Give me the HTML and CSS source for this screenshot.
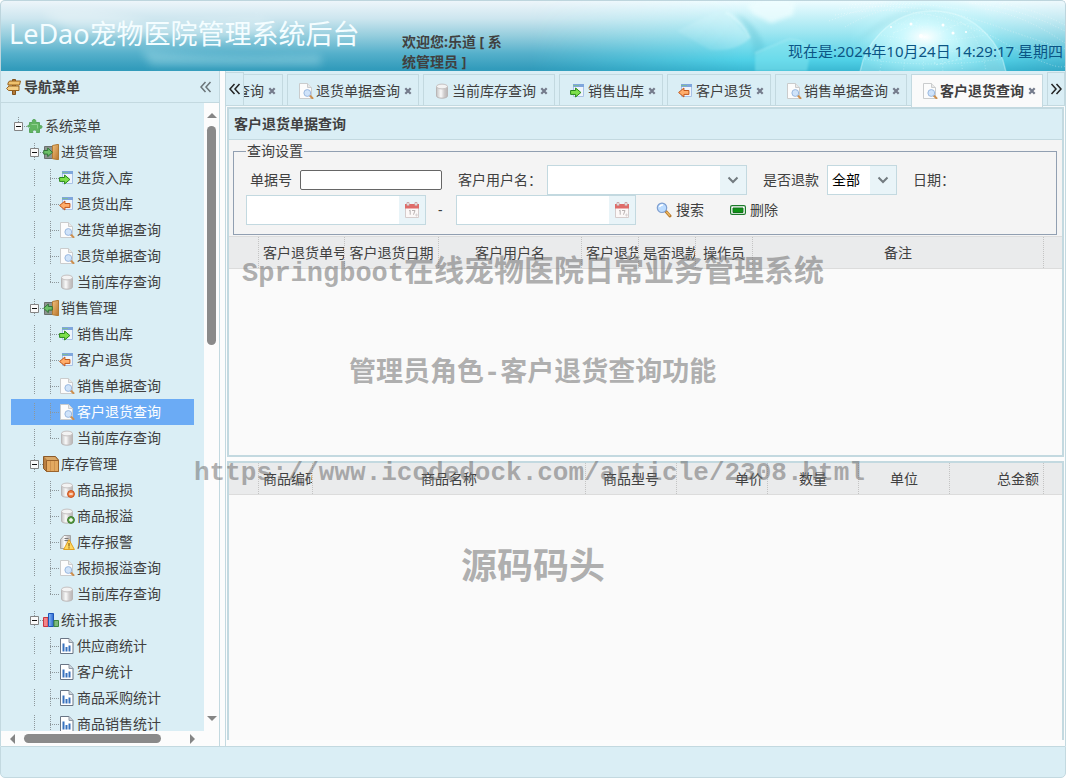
FILE: index.html
```html
<!DOCTYPE html>
<html lang="zh-CN">
<head>
<meta charset="utf-8">
<title>LeDao宠物医院管理系统后台</title>
<link rel="stylesheet" href="styles.css">
</head>
<body>
<svg class="defs" aria-hidden="true">
  <defs>
    <linearGradient id="cyl" x1="0" x2="1" y1="0" y2="0"><stop offset="0" stop-color="#c2c2c2"/><stop offset=".4" stop-color="#fafafa"/><stop offset=".7" stop-color="#cfcccc"/><stop offset="1" stop-color="#b9b5b5"/></linearGradient>
    <linearGradient id="wood" x1="0" x2="1" y1="0" y2="1"><stop offset="0" stop-color="#f0c07c"/><stop offset="1" stop-color="#b9752c"/></linearGradient>
    <linearGradient id="blue" x1="0" x2="1" y1="0" y2="0"><stop offset="0" stop-color="#8fc0fa"/><stop offset="1" stop-color="#2a66cf"/></linearGradient>
    <symbol id="i-puzzle" viewBox="0 0 16 16"><path d="M2.500 4.500h3.200C4.800 2.500 5.500 1.500 7 1.500s2.500 1 1.500 3h4V8c1.500-1 2.700-.3 2.500 1s-1.200 2-2.500 1v4.500H9.300c.8-1.600-.4-2.500-1.800-2.500s-2.500.9-1.500 2.500H2.500v-4C3.700 11 3.800 8 1.500 9c-1 0-1.200-1.500 0-1.700h1z" fill="#62b562" stroke="#58a75e"/><path d="M4.500 6.500h6v4" fill="none" stroke="#8fd08f"/></symbol>
    <symbol id="i-doorin" viewBox="0 0 16 16"><path d="M1.500 2.500h8v12h-8z" fill="#8d9490" stroke="#6b706e"/><path d="M9.500 1.500l6-1.200v15.400l-6-1z" fill="url(#wood)" stroke="#b17a34"/><path d="M.7 6.500h4V4l4.800 4.300-4.800 4.300v-2.500h-4z" fill="#6cc067" stroke="#2f7436"/></symbol>
    <symbol id="i-doorout" viewBox="0 0 16 16"><path d="M1.500 2.500h8v12h-8z" fill="#8d9490" stroke="#6b706e"/><path d="M9.500 1.500l6-1.200v15.400l-6-1z" fill="url(#wood)" stroke="#b17a34"/><path d="M9.300 6.500h-4V4L.6 8.300l4.700 4.300v-2.500h4z" fill="#6cc067" stroke="#2f7436"/></symbol>
    <symbol id="i-in" viewBox="0 0 16 16"><path d="M3.500 1.500h10v12h-10z" fill="#eef4fb" stroke="#a9c2e6"/><path d="M3 1h11v3H3z" fill="#7fa6dc"/><path d="M3 2h6v1H3z" fill="#7dbb9c"/><path d="M.6 7.500h5V5l5.300 4.500L5.600 14v-2.600h-5z" fill="#7ee04a" stroke="#28871a"/></symbol>
    <symbol id="i-back" viewBox="0 0 16 16"><path d="M3.500 1.500h10v12h-10z" fill="#eef4fb" stroke="#a9c2e6"/><path d="M3 1h11v3H3z" fill="#7fa6dc"/><path d="M3 2h6v1H3z" fill="#7dbb9c"/><path d="M10.900 7.500h-5V5L.6 9.500 5.900 14v-2.600h5z" fill="#ffad6b" stroke="#c2561a"/></symbol>
    <symbol id="i-doc" viewBox="0 0 16 16"><path d="M1.500.5h8l4 4v11h-12z" fill="#fcfcfc" stroke="#cacccd"/><path d="M9.500.5v4h4" fill="#e8e8e8" stroke="#cacccd"/><path d="M11.800 12.500l2.700 2.700" stroke="#cc8f4e" stroke-width="2" stroke-linecap="round"/><circle cx="9.300" cy="10" r="3.400" fill="#cfe3fa" stroke="#9bb9e0"/></symbol>
    <symbol id="i-db" viewBox="0 0 16 16"><path d="M2.500 3.500v9.500c0 1.200 2.400 2.200 5.500 2.200s5.500-1 5.500-2.200V3.500z" fill="url(#cyl)" stroke="#bab6b6"/><ellipse cx="8" cy="3.500" rx="5.500" ry="2.400" fill="#f3f3f3" stroke="#c5c1c1"/></symbol>
    <symbol id="i-dbminus" viewBox="0 0 16 16"><use href="#i-db"/><circle cx="12" cy="12" r="3.400" fill="#ee8549" stroke="#c84a14"/><path d="M10.300 12h3.400" stroke="#fff" stroke-width="1.300"/></symbol>
    <symbol id="i-dbplus" viewBox="0 0 16 16"><use href="#i-db"/><circle cx="12" cy="12" r="3.400" fill="#5fa448" stroke="#38752a"/><path d="M10.100 12h3.800M12 10.100v3.800" stroke="#fff" stroke-width="1.300"/></symbol>
    <symbol id="i-warn" viewBox="0 0 16 16"><path d="M1.500 5.500l3.500-4h6.500v10l-3 3h-7z" fill="url(#cyl)" stroke="#a5a5a5"/><path d="M5.500 4.500h4M5.500 6.500h4" stroke="#777"/><path d="M10 5.700l5.400 9.800H4.600z" fill="#ffd75e" stroke="#e0a021"/><path d="M10 9v3.500M10 13.300v1.200" stroke="#6d4b09"/></symbol>
    <symbol id="i-box" viewBox="0 0 16 16"><path d="M.5.500h12l3 3.500v11.500h-12l-3-3z" fill="#b97f42" stroke="#8a5a2a"/><path d="M1.500 1h10.500l2.500 3H4z" fill="#d9a868"/><path d="M3.500 4.500h12v11h-12z" fill="#e3a961" stroke="#9a632c"/><path d="M7.500 5v10M11.500 5v10" stroke="#cf9350"/></symbol>
    <symbol id="i-chart" viewBox="0 0 16 16"><path d="M.5 5.500h4.500v9H.5z" fill="#f2858a" stroke="#c9353f"/><path d="M5.500 1.500h5v13h-5z" fill="url(#blue)" stroke="#1d55b9"/><path d="M11 8.500h4.500v6H11z" fill="#7cba7c" stroke="#3e863e"/></symbol>
    <symbol id="i-report" viewBox="0 0 16 16"><path d="M1.500.5h8.500l4 4v11H1.500z" fill="#fff" stroke="#697585"/><path d="M10 .5v4h4" fill="#ccd3da" stroke="#8f99a5"/><path d="M4.500 5.500v8M7.500 9v4.500M10.500 7.500v6" stroke="#3872be" stroke-width="2"/></symbol>
    <symbol id="i-sign" viewBox="0 0 16 16"><path d="M6.500.5h3v15h-3z" fill="#b47b37" stroke="#82531e"/><path d="M2 4l1.500-2h11L13.500 6H2z" fill="#efc16d" stroke="#95611f"/><path d="M.6 9.500L3 7h10v4.500H2.500z" fill="#f5cf85" stroke="#95611f"/></symbol>
    <symbol id="i-cal" viewBox="0 0 16 16"><path d="M1.500 3h13v12.500h-13z" fill="#fcf8f7" stroke="#d5cccc"/><path d="M1 2h14v4.500H1z" fill="#df6b68"/><path d="M3 .5h2v3H3zM11 .5h2v3h-2z" fill="#fff" stroke="#c9a9a9"/><path d="M5 9l1.200-.8v4.500M8 8.500h3l-1.500 4.200" fill="none" stroke="#b9b2b2"/><path d="M11 13h3M12.500 11.500v3" stroke="#d9d4d4"/></symbol>
    <symbol id="i-search" viewBox="0 0 16 16"><path d="M10 9.500l4 4.500" stroke="#b7792b" stroke-width="3" stroke-linecap="round"/><path d="M10.400 9.800l3.500 3.900" stroke="#efb962" stroke-width="1.300"/><circle cx="6" cy="5.800" r="4.700" fill="#bcdcff" stroke="#7f9fd0" stroke-width="1.200"/><path d="M3.500 5a3 3 0 0 1 3.500-2" fill="none" stroke="#fff" stroke-width="1.500"/></symbol>
    <symbol id="i-remove" viewBox="0 0 16 16"><rect x=".6" y="3.600" width="14.800" height="8.800" rx="1.500" fill="#fff" stroke="#1b792a" stroke-width="1.200"/><path d="M3 6h10v4.500H3z" fill="#0e9415" stroke="#176e20"/></symbol>
    <symbol id="i-minus" viewBox="0 0 9 9"><path d="M.5.5h8v8h-8z" fill="#fafafa" stroke="#848484"/><path d="M2 4.500h5" stroke="#111"/></symbol>
    <symbol id="i-x" viewBox="0 0 8 8"><path d="M1.300 1.300l5.400 5.400M6.700 1.300L1.300 6.700" stroke="#747b8b" stroke-width="2.200"/></symbol>
    <symbol id="i-left" viewBox="0 0 12 12"><path d="M5.500 1L1 6l4.500 5M10.500 1L6 6l4.500 5" fill="none" stroke="currentColor" stroke-width="1.500"/></symbol>
    <symbol id="i-right" viewBox="0 0 12 12"><path d="M1.500 1L6 6l-4.500 5M6.500 1L11 6l-4.500 5" fill="none" stroke="currentColor" stroke-width="1.500"/></symbol>
    <symbol id="i-down" viewBox="0 0 12 12"><path d="M1.500 3.500L6 8l4.500-4.500" fill="none" stroke="#737b80" stroke-width="2"/></symbol>
  </defs>
</svg>

<div class="app">
  <header class="banner">
    <svg class="banner-left" viewBox="0 0 360 70" aria-hidden="true">
      <defs><filter id="soft" x="-20%" y="-50%" width="140%" height="200%"><feGaussianBlur stdDeviation="4"/></filter></defs>
      <path d="M40 12q60-6 110 10l110-4 20 12-60 8-150-8z" fill="#fff" opacity=".3" filter="url(#soft)"/>
      <path d="M140 48q60 10 180 6v10H150z" fill="#c8f0f5" opacity=".35" filter="url(#soft)"/>
    </svg>
    <svg class="banner-right" viewBox="0 0 536 70" aria-hidden="true">
      <defs>
        <linearGradient id="cyan" x1="0" x2="0" y1="0" y2="1"><stop offset="0" stop-color="#eefcff"/><stop offset=".45" stop-color="#9ee6f1"/><stop offset=".85" stop-color="#4fd0e6"/><stop offset="1" stop-color="#3ab8d2"/></linearGradient>
        <linearGradient id="fadein" x1="0" x2="1" y1="0" y2="0"><stop offset="0" stop-color="#000"/><stop offset=".4" stop-color="#fff"/><stop offset=".85" stop-color="#fff"/><stop offset="1" stop-color="#777"/></linearGradient>
        <mask id="side"><path d="M0 0h536v70H0z" fill="url(#fadein)"/></mask>
        <radialGradient id="glow"><stop offset="0" stop-color="#fff"/><stop offset=".3" stop-color="#d4fbff" stop-opacity=".8"/><stop offset="1" stop-color="#aef3fa" stop-opacity="0"/></radialGradient>
        <linearGradient id="dice" x1="0" x2="1" y1="1" y2="0"><stop offset="0" stop-color="#d5f5fa" stop-opacity="0"/><stop offset="1" stop-color="#d5f5fa" stop-opacity=".6"/></linearGradient>
        <filter id="mist" x="-20%" y="-50%" width="140%" height="200%"><feGaussianBlur stdDeviation="2"/></filter>
        <filter id="haze"><feGaussianBlur stdDeviation="1"/></filter>
      </defs>
      <path d="M0 0h536v70H0z" fill="url(#cyan)" mask="url(#side)"/>
      <path d="M148 30l36-18q8-3 13-1l24 26q-14 14-40 12z" fill="url(#dice)" filter="url(#haze)"/>
      <path d="M197 11q17 11 24 26" fill="none" stroke="#e9fdff" stroke-width="1.500" opacity=".7" filter="url(#haze)"/>
      <path d="M206 12q20 8 30 34l-12 12q2-26-18-46z" fill="#55b9cc" opacity=".3" filter="url(#mist)"/>
      <path d="M218 4l12-4h36l-2 14-22 8-18-9z" fill="#f0feff" opacity=".75" filter="url(#mist)"/>
      <path d="M226 52l34-14q14 0 22 12l-4 20h-52z" fill="#85e5ef" opacity=".5" filter="url(#haze)"/>
      <path d="M226 52l34-14q14 0 22 12" fill="none" stroke="#c4f6fa" opacity=".6" filter="url(#haze)"/>
      <path d="M326 43Q360 4 402 8q42 3 72 62h-14Q423 20 390 20q-34 0-64 23z" fill="#59afc0" opacity=".2" filter="url(#mist)"/>
      <circle cx="404" cy="84" r="74" fill="#d8fbff" opacity=".35"/>
      <ellipse cx="396" cy="36" rx="76" ry="44" fill="url(#glow)"/>
      <g fill="none" stroke="#e8ffff" opacity=".4">
        <circle cx="404" cy="84" r="74" stroke-width="1.500"/>
        <ellipse cx="404" cy="84" rx="54" ry="74" stroke-dasharray="1 2"/><ellipse cx="404" cy="84" rx="30" ry="74" stroke-dasharray="1 2"/><ellipse cx="404" cy="84" rx="10" ry="74" stroke-dasharray="1 2"/>
        <path d="M366 22q38 8 76 0M352 34q52 10 104 0M342 46q62 10 124 0M336 58q68 10 136 0" stroke-dasharray="1 2"/>
        <path d="M364 32l22-8 18 12 28-15 14 9M384 18l20 18 2 28 42-10" stroke-dasharray="2 2"/>
      </g>
      <g fill="none" stroke="#fff" stroke-dasharray="1 2" opacity=".4"><path d="M310 8q80-10 160 18t66 20M306 14q90-16 166 26t64 16M300 20q50-20 80-16M440 2q50 4 96 28M456 8q40 6 80 34M320 4q60-6 120 6M316 26q30-18 60-20M470 2q36 6 66 22"/></g>
      <g fill="#fff"><circle cx="382" cy="23" r="1.500"/><circle cx="392" cy="35" r="2"/><circle cx="414" cy="24" r="1.500"/><circle cx="424" cy="32" r="1.500"/><circle cx="362" cy="26" r="1"/><circle cx="437" cy="31" r="1"/></g>
    </svg>
    <h1 class="brand">LeDao宠物医院管理系统后台</h1>
    <p class="welcome">欢迎您:乐道 [ 系统管理员 ]</p>
    <time class="clock">现在是:2024年10月24日 14:29:17 星期四</time>
  </header>

  <div class="middle">
    <nav class="sidebar">
      <div class="side-head"><svg class="icon"><use href="#i-sign"/></svg><h2>导航菜单</h2><button class="collapse" aria-label="折叠"><svg><use href="#i-left"/></svg></button></div>
      <div class="side-body">
        <ul class="tree">
          <li><div class="node"><button class="hit root" aria-label="收起"><svg><use href="#i-minus"/></svg></button><svg class="icon"><use href="#i-puzzle"/></svg><span>系统菜单</span></div>
            <ul>
              <li><div class="node"><i></i><button class="hit" aria-label="收起"><svg><use href="#i-minus"/></svg></button><svg class="icon"><use href="#i-doorin"/></svg><span>进货管理</span></div>
                <ul>
                  <li><a href="#" class="node"><i></i><i class="line"></i><i class="join"></i><svg class="icon"><use href="#i-in"/></svg><span>进货入库</span></a></li>
                  <li><a href="#" class="node"><i></i><i class="line"></i><i class="join"></i><svg class="icon"><use href="#i-back"/></svg><span>退货出库</span></a></li>
                  <li><a href="#" class="node"><i></i><i class="line"></i><i class="join"></i><svg class="icon"><use href="#i-doc"/></svg><span>进货单据查询</span></a></li>
                  <li><a href="#" class="node"><i></i><i class="line"></i><i class="join"></i><svg class="icon"><use href="#i-doc"/></svg><span>退货单据查询</span></a></li>
                  <li><a href="#" class="node"><i></i><i class="line"></i><i class="join last"></i><svg class="icon"><use href="#i-db"/></svg><span>当前库存查询</span></a></li>
                </ul>
              </li>
              <li><div class="node"><i></i><button class="hit" aria-label="收起"><svg><use href="#i-minus"/></svg></button><svg class="icon"><use href="#i-doorout"/></svg><span>销售管理</span></div>
                <ul>
                  <li><a href="#" class="node"><i></i><i class="line"></i><i class="join"></i><svg class="icon"><use href="#i-in"/></svg><span>销售出库</span></a></li>
                  <li><a href="#" class="node"><i></i><i class="line"></i><i class="join"></i><svg class="icon"><use href="#i-back"/></svg><span>客户退货</span></a></li>
                  <li><a href="#" class="node"><i></i><i class="line"></i><i class="join"></i><svg class="icon"><use href="#i-doc"/></svg><span>销售单据查询</span></a></li>
                  <li><a href="#" class="node selected"><i></i><i class="line"></i><i class="join"></i><svg class="icon"><use href="#i-doc"/></svg><span>客户退货查询</span></a></li>
                  <li><a href="#" class="node"><i></i><i class="line"></i><i class="join last"></i><svg class="icon"><use href="#i-db"/></svg><span>当前库存查询</span></a></li>
                </ul>
              </li>
              <li><div class="node"><i></i><button class="hit" aria-label="收起"><svg><use href="#i-minus"/></svg></button><svg class="icon"><use href="#i-box"/></svg><span>库存管理</span></div>
                <ul>
                  <li><a href="#" class="node"><i></i><i class="line"></i><i class="join"></i><svg class="icon"><use href="#i-dbminus"/></svg><span>商品报损</span></a></li>
                  <li><a href="#" class="node"><i></i><i class="line"></i><i class="join"></i><svg class="icon"><use href="#i-dbplus"/></svg><span>商品报溢</span></a></li>
                  <li><a href="#" class="node"><i></i><i class="line"></i><i class="join"></i><svg class="icon"><use href="#i-warn"/></svg><span>库存报警</span></a></li>
                  <li><a href="#" class="node"><i></i><i class="line"></i><i class="join"></i><svg class="icon"><use href="#i-doc"/></svg><span>报损报溢查询</span></a></li>
                  <li><a href="#" class="node"><i></i><i class="line"></i><i class="join last"></i><svg class="icon"><use href="#i-db"/></svg><span>当前库存查询</span></a></li>
                </ul>
              </li>
              <li><div class="node"><i></i><button class="hit" aria-label="收起"><svg><use href="#i-minus"/></svg></button><svg class="icon"><use href="#i-chart"/></svg><span>统计报表</span></div>
                <ul>
                  <li><a href="#" class="node"><i></i><i class="line"></i><i class="join"></i><svg class="icon"><use href="#i-report"/></svg><span>供应商统计</span></a></li>
                  <li><a href="#" class="node"><i></i><i class="line"></i><i class="join"></i><svg class="icon"><use href="#i-report"/></svg><span>客户统计</span></a></li>
                  <li><a href="#" class="node"><i></i><i class="line"></i><i class="join"></i><svg class="icon"><use href="#i-report"/></svg><span>商品采购统计</span></a></li>
                  <li><a href="#" class="node"><i></i><i class="line"></i><i class="join"></i><svg class="icon"><use href="#i-report"/></svg><span>商品销售统计</span></a></li>
                </ul>
              </li>
            </ul>
          </li>
        </ul>
        <div class="vbar" aria-hidden="true"><span class="arrow up"></span><span class="thumb"></span><span class="arrow down"></span></div>
        <div class="hbar" aria-hidden="true"><span class="arrow left"></span><span class="thumb"></span><span class="arrow right"></span></div>
      </div>
    </nav>

    <main class="center">
      <div class="tabbar">
        <button class="scroll prev" aria-label="向左"><svg><use href="#i-left"/></svg></button>
        <div class="tabs">
          <div class="tab"><svg class="icon"><use href="#i-doc"/></svg><span>进货单据查询</span><button class="close" aria-label="关闭"><svg><use href="#i-x"/></svg></button></div>
          <div class="tab"><svg class="icon"><use href="#i-doc"/></svg><span>退货单据查询</span><button class="close" aria-label="关闭"><svg><use href="#i-x"/></svg></button></div>
          <div class="tab"><svg class="icon"><use href="#i-db"/></svg><span>当前库存查询</span><button class="close" aria-label="关闭"><svg><use href="#i-x"/></svg></button></div>
          <div class="tab"><svg class="icon"><use href="#i-in"/></svg><span>销售出库</span><button class="close" aria-label="关闭"><svg><use href="#i-x"/></svg></button></div>
          <div class="tab"><svg class="icon"><use href="#i-back"/></svg><span>客户退货</span><button class="close" aria-label="关闭"><svg><use href="#i-x"/></svg></button></div>
          <div class="tab"><svg class="icon"><use href="#i-doc"/></svg><span>销售单据查询</span><button class="close" aria-label="关闭"><svg><use href="#i-x"/></svg></button></div>
          <div class="tab active"><svg class="icon"><use href="#i-doc"/></svg><span>客户退货查询</span><button class="close" aria-label="关闭"><svg><use href="#i-x"/></svg></button></div>
        </div>
        <button class="scroll next" aria-label="向右"><svg><use href="#i-right"/></svg></button>
      </div>

      <section class="panel upper">
        <h2 class="panel-title">客户退货单据查询</h2>
        <form class="query">
          <fieldset>
            <legend>查询设置</legend>
            <div class="row first">
              <div class="field"><label for="billno">单据号</label><input class="plain" id="billno" type="text"></div>
              <div class="field tight"><label for="customer">客户用户名：</label><div class="combo"><input id="customer" type="text"><button type="button" aria-label="展开"><svg class="chev"><use href="#i-down"/></svg></button></div></div>
              <div class="field"><label for="refund">是否退款</label><div class="pick"><select id="refund"><option>全部</option></select><svg class="chev"><use href="#i-down"/></svg></div></div>
              <label for="from">日期：</label>
            </div>
            <div class="row">
              <div class="combo date"><input id="from" type="text"><button type="button" aria-label="选择日期"><svg class="icon"><use href="#i-cal"/></svg></button></div>
              <span class="dash">-</span>
              <div class="combo date"><input type="text" aria-label="结束日期"><button type="button" aria-label="选择日期"><svg class="icon"><use href="#i-cal"/></svg></button></div>
              <button type="button" class="action"><svg class="icon"><use href="#i-search"/></svg>搜索</button>
              <button type="button" class="action"><svg class="icon"><use href="#i-remove"/></svg>删除</button>
            </div>
          </fieldset>
        </form>
        <table class="grid">
          <colgroup><col class="w30"><col class="w86"><col class="w94"><col class="w143"><col class="w57"><col class="w57"><col class="w57"><col><col class="w18"></colgroup>
          <thead><tr><th></th><th>客户退货单号</th><th>客户退货日期</th><th>客户用户名</th><th>客户退货</th><th>是否退款</th><th>操作员</th><th>备注</th><th></th></tr></thead>
        </table>
      </section>

      <section class="panel lower">
        <table class="grid">
          <colgroup><col class="w30"><col class="w54"><col><col class="w91"><col class="w91"><col class="w91"><col class="w91"><col class="w94"><col class="w18"></colgroup>
          <thead><tr><th></th><th>商品编码</th><th>商品名称</th><th>商品型号</th><th class="num">单价</th><th>数量</th><th>单位</th><th class="num">总金额</th><th></th></tr></thead>
        </table>
      </section>
    </main>
  </div>

  <footer class="footer"></footer>
</div>

<div class="mark m1"><b>Springboot</b>在线宠物医院日常业务管理系统</div>
<div class="mark m2">管理员角色<b>-</b>客户退货查询功能</div>
<div class="mark m3"><b>https://www.icodedock.com/article/2308.html</b></div>
<div class="mark m4">源码码头</div>
</body>
</html>
```
FILE: styles.css
```css
* { box-sizing: border-box; }
body { margin: 0; background: #fff; color: #404040; font: 14px/20px "Noto Sans", "Noto Sans CJK SC", sans-serif; }
h1, h2, p, ul { margin: 0; padding: 0; font-weight: normal; }
ul { list-style: none; }
button { border: 0; padding: 0; background: none; color: inherit; font: inherit; display: flex; align-items: center; justify-content: center; }
.defs { position: absolute; width: 0; height: 0; }
.icon { width: 16px; height: 16px; flex: none; display: block; }

.app { height: 100vh; display: flex; flex-direction: column; }

.banner { position: relative; display: flex; flex: none; height: 71px; padding: 0 2px 0 8px; overflow: hidden; border: 1px solid #bdd5dd; border-bottom: 0; border-radius: 5px 5px 0 0; background: linear-gradient(#edf5fa, #cde6ef 25%, #94cddd 50%, #55b0cb 75%, #329bbb 97%); }
.banner-left, .banner-right { position: absolute; top: 0; height: 70px; }
.banner-left { left: 0; width: 360px; }
.banner-right { right: 0; width: 536px; }
.brand { position: relative; flex: none; width: 393px; padding-top: 13px; color: #f4fdff; font-size: 27px; line-height: 40px; white-space: nowrap; }
.welcome { position: relative; width: 112px; padding-top: 31px; font-weight: bold; }
.clock { position: relative; margin: 40px 0 0 auto; color: #0b5585; font-size: 15px; white-space: nowrap; }

.middle { flex: 1; min-height: 0; display: flex; background: #fcfcfc; }
.sidebar { width: 220px; flex: none; display: flex; flex-direction: column; border: solid #c3d9e0; border-width: 0 1px; }
.side-head { height: 32px; flex: none; display: flex; align-items: center; padding: 0 7px 0 5px; background: #daeef5; border-bottom: 1px solid #c3d9e0; }
.side-head h2 { flex: 1; padding-left: 2px; font-size: 14px; font-weight: bold; }
.collapse { color: #6b7478; }
.collapse svg, .scroll svg { width: 12px; height: 12px; }
.side-body { flex: 1; min-height: 0; display: grid; grid-template: minmax(0, 1fr) 15px / minmax(0, 1fr) 15px; }
.tree { overflow: hidden; padding: 10px; background: #daeef5; }
.node { height: 26px; display: flex; align-items: center; color: inherit; text-decoration: none; white-space: nowrap; }
.node span { padding: 0 2px; }
.node.selected { background: #6babf5; color: #fff; }
.node i, .hit { width: 16px; height: 18px; flex: none; }
.line { background: repeating-linear-gradient(#8d979b 0 1px, transparent 1px 2px) 7px 0 / 1px 18px no-repeat; }
.join { background: repeating-linear-gradient(#8d979b 0 1px, transparent 1px 2px) 7px 0 / 1px 18px no-repeat, repeating-linear-gradient(90deg, #8d979b 0 1px, transparent 1px 2px) 7px 9px / 9px 1px no-repeat; }
.join.last { background-size: 1px 10px, 9px 1px; }
.hit { background: repeating-linear-gradient(#8d979b 0 1px, transparent 1px 2px) 7px 0 / 1px 18px no-repeat, repeating-linear-gradient(90deg, #8d979b 0 1px, transparent 1px 2px) 7px 9px / 9px 1px no-repeat; }
.hit.root { background-size: 1px 6px, 9px 1px; }
.hit svg { width: 9px; height: 9px; margin-right: 1px; }
.vbar { display: flex; flex-direction: column; align-items: center; padding: 10px 0; }
.hbar { grid-column: 1; display: flex; align-items: center; padding: 0 9px; }
.thumb { background: #8a8a8a; border-radius: 5px; }
.vbar .thumb { width: 9px; height: 36%; margin: 8px 0 auto; }
.hbar .thumb { height: 9px; width: 74%; margin: 0 auto 0 9px; }
.arrow { flex: none; border: 5px solid transparent; }
.up { border-top: 0; border-bottom-color: #858585; }
.down { border-bottom: 0; border-top-color: #858585; }
.left { border-left: 0; border-right-color: #858585; }
.right { border-right: 0; border-left-color: #858585; }

.center { flex: 1; min-width: 0; margin-left: 5px; display: flex; flex-direction: column; padding: 0 1px 6px; border: solid #c3d9e0; border-width: 0 1px; }
.tabbar { flex: none; height: 36px; display: flex; margin: 0 -1px; padding: 1px 0 0; background: linear-gradient(#daeef5 34px, #c3d9e0 34px 35px, #f6fafb 35px); }
.scroll { width: 18px; height: 34px; flex: none; border: 1px solid #c3d9e0; color: #222; }
.prev { border-left: 0; }
.tabs { flex: 1; min-width: 0; display: flex; justify-content: flex-end; gap: 4px; padding: 2px 4px 0 0; overflow: hidden; }
.tab { flex: none; height: 32px; display: flex; align-items: center; gap: 2px; padding: 0 4px 0 10px; border: 1px solid #c3d9e0; border-bottom: 0; white-space: nowrap; }
.tab.active { height: 33px; background: #fafafa; font-weight: bold; }
.close { width: 12px; height: 16px; }
.close svg { width: 8px; height: 8px; }

.panel { border: 2px solid #c3d9e0; background: #fafafa; min-height: 0; overflow: hidden; }
.upper { flex: 350 1 0; }
.lower { flex: 280 1 0; margin-top: 4px; border-bottom: 0; }
.panel-title { height: 31px; padding-left: 5px; background: #daeef5; border-bottom: 1px solid #c3d9e0; font-size: 14px; line-height: 30px; font-weight: bold; }
.query { padding: 1px 5px 1px 4px; background: #f4f4f4; }
fieldset { margin: 0; min-width: 0; padding: 4px 12px 9px; border: 1px solid #919fb1; }
legend { padding: 0 1px; }
.row { display: flex; align-items: center; gap: 12px; white-space: nowrap; }
.row.first { gap: 16px; padding-left: 4px; }
.field { display: flex; align-items: center; gap: 8px; }
.field.tight { gap: 5px; }
input, select { font: inherit; color: #000; }
.plain { width: 142px; height: 20px; border: 1px solid #666; border-radius: 2px; background: #fff; }
.combo { width: 200px; height: 30px; display: flex; border: 1px solid #c3d9e0; background: #fff; }
.combo.date { width: 180px; }
.combo input { flex: 1; min-width: 0; border: 0; padding: 0 4px; background: none; }
.combo button { width: 26px; background: #e9f4f8; }
.chev { width: 12px; height: 12px; }
.pick { position: relative; }
.pick select { display: block; width: 70px; height: 30px; padding: 0 4px; border: 1px solid #c3d9e0; border-radius: 0; appearance: none; background: linear-gradient(#e9f4f8, #e9f4f8) right / 26px 100% no-repeat #fff; }
.pick .chev { position: absolute; right: 8px; top: 9px; pointer-events: none; }
.dash { width: 6px; }
.action { gap: 4px; margin-left: 8px; }
.action + .action { margin-left: 14px; }

.grid { width: 100%; table-layout: fixed; border-collapse: separate; border-spacing: 0; background: #eaebec; border: solid #dcdcdc; border-width: 1px 0; }
.lower .grid { border-top: 0; }
.grid th { height: 31px; padding: 0 4px; border-right: 1px dotted #c4c4c4; font-weight: normal; text-align: center; overflow: hidden; white-space: nowrap; }
.grid th:last-child { border-right: 0; }
.grid .num { text-align: right; }
.w18 { width: 18px; } .w30 { width: 30px; } .w54 { width: 54px; } .w57 { width: 57px; } .w86 { width: 86px; } .w91 { width: 91px; } .w94 { width: 94px; } .w143 { width: 143px; }

.footer { flex: none; height: 32px; background: #daeef5; border: 1px solid #c3d9e0; border-radius: 0 0 5px 5px; }

.mark { position: absolute; color: rgba(100, 100, 100, .5); font-family: "Noto Sans CJK SC", sans-serif; font-weight: bold; font-size: 27px; line-height: 40px; white-space: nowrap; pointer-events: none; }
.mark b { font-family: "Liberation Mono", monospace; font-size: 27px; }
.m1 { left: 242px; top: 248px; font-size: 30px; }
.m2 { left: 349px; top: 350px; }
.m3 { left: 194px; top: 449px; }
.m3 b { font-size: 26px; }
.m4 { left: 461px; top: 543px; font-size: 36px; }
```
